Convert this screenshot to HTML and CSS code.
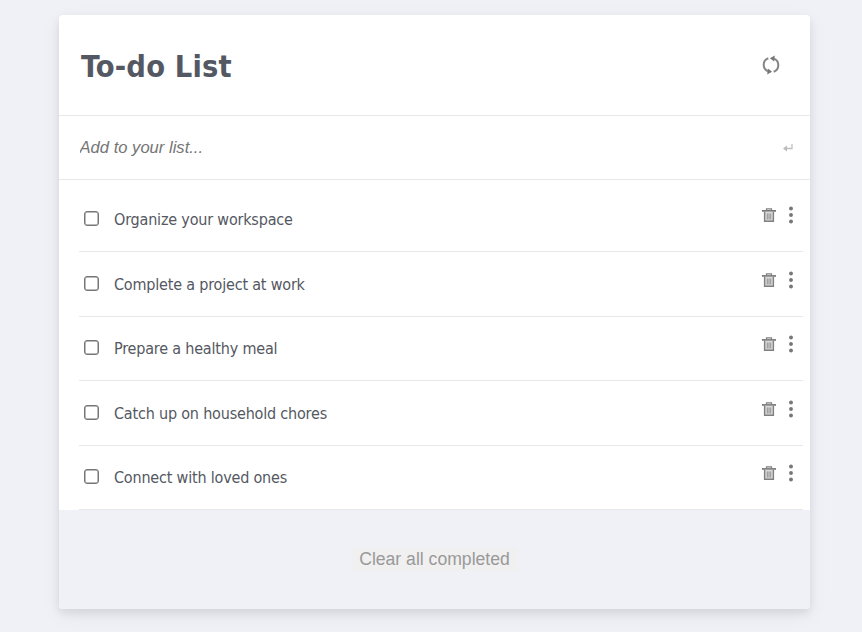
FILE: index.html
```html
<!DOCTYPE html>
<html lang="en">
<head>
<meta charset="utf-8">
<title>To-do List</title>
<link rel="stylesheet" href="styles.css">
</head>
<body>
<svg class="sprite" aria-hidden="true">
  <symbol id="trash" viewBox="0 0 14 14">
    <path d="M4.500 2.500V.8h5v1.700" fill="none" stroke="#818181" stroke-width="1.200"/>
    <path d="M0 2.100h14v1.700H0z" fill="#777"/>
    <path d="M2.600 3.800v9.400h8.800V3.800" fill="#d8d8d8" stroke="#808080" stroke-width="1.400"/>
    <path d="M5.300 5.500v6M7 5.500v6M8.700 5.500v6" stroke="#8c8c8c" stroke-width=".9"/>
  </symbol>
  <symbol id="dots" viewBox="0 0 4 18">
    <circle cx="2" cy="2.500" r="1.950"/><circle cx="2" cy="9" r="1.950"/><circle cx="2" cy="15.500" r="1.950"/>
  </symbol>
</svg>
<main class="card">
  <header class="head">
    <h1>To-do List</h1>
    <svg class="refresh" viewBox="0 0 18 20" fill="none" stroke="#858585" stroke-width="2">
      <path d="M6.300 3.300C.3 5.500 .2 13.500 5.800 16.300M11.700 16.700C17.700 14.500 17.800 6.500 12.200 3.700"/>
      <path d="M7.900 3.200L12.800 .6L12.200 6.400zM10.100 16.800L5.200 19.400L5.800 13.600z" fill="#777" stroke="none"/>
    </svg>
  </header>
  <div class="add">
    <input type="text" placeholder="Add to your list...">
    <svg class="enter" viewBox="0 0 10 8"><path d="M9 0v4.500H3" fill="none" stroke="#c0c0c0" stroke-width="1.300"/><path d="M0 4.500L4 1.500v6z" fill="#bbb"/></svg>
  </div>
  <ul class="list">
    <li><input type="checkbox"><span>Organize your workspace</span><svg class="trash"><use href="#trash"/></svg><svg class="dots"><use href="#dots"/></svg></li>
    <li><input type="checkbox"><span>Complete a project at work</span><svg class="trash"><use href="#trash"/></svg><svg class="dots"><use href="#dots"/></svg></li>
    <li><input type="checkbox"><span>Prepare a healthy meal</span><svg class="trash"><use href="#trash"/></svg><svg class="dots"><use href="#dots"/></svg></li>
    <li><input type="checkbox"><span>Catch up on household chores</span><svg class="trash"><use href="#trash"/></svg><svg class="dots"><use href="#dots"/></svg></li>
    <li><input type="checkbox"><span>Connect with loved ones</span><svg class="trash"><use href="#trash"/></svg><svg class="dots"><use href="#dots"/></svg></li>
  </ul>
  <footer class="foot"><button type="button">Clear all completed</button></footer>
</main>
</body>
</html>
```
FILE: styles.css
```css
* { box-sizing: border-box; }
body {
  margin: 0;
  height: 632px;
  overflow: hidden;
  background: #f0f1f6;
  color: #545862;
  font-family: Tahoma, "DejaVu Sans Condensed", "Noto Sans", sans-serif;
}
.sprite { display: none; }
.card {
  width: 751px;
  height: 594px;
  margin: 15px 0 0 59px;
  background: #fff;
  border-radius: 4px;
  box-shadow: 0 4px 8px 0 rgba(0, 0, 0, .08), 0 6px 20px 0 rgba(0, 0, 0, .06);
  overflow: hidden;
}
.head {
  display: flex;
  align-items: center;
  justify-content: space-between;
  height: 101px;
  padding: 0 30px 0 22px;
  border-bottom: 1px solid #e8e8e8;
}
h1 {
  margin: 3px 0 0;
  font-size: 30.500px;
  line-height: 40px;
  letter-spacing: .150px;
  white-space: nowrap;
}
.refresh { width: 18px; height: 20px; }
.add {
  display: flex;
  align-items: center;
  height: 64px;
  padding: 0 17px 0 20.500px;
  border-bottom: 1px solid #e8e8e8;
}
.add input {
  flex: 1;
  padding: 0;
  border: 0;
  outline: 0;
  font: italic 16.600px "Liberation Sans", Arial, sans-serif;
}
.add input::placeholder { color: #757575; }
.enter { width: 10px; height: 8px; }
.list { height: 330px; margin: 0; padding: 7.500px 7px 0 20px; list-style: none; }
.list li {
  display: flex;
  align-items: center;
  height: 64.500px;
  border-bottom: 1px solid #e8e8e8;
}
.list input {
  appearance: none;
  width: 15px;
  height: 15px;
  margin: 0 15px 1px 5px;
  border: 1px solid #767676;
  box-shadow: inset 0 0 0 .5px #767676;
  border-radius: 3px;
}
.list span {
  margin-top: 1.500px;
  font-size: 16px;
  line-height: 24px;
  letter-spacing: -.190px;
  white-space: nowrap;
}
.trash { width: 14px; height: 14px; margin: 0 13px 8px auto; }
.dots { width: 4px; height: 18px; margin: 0 10px 8px 0; fill: #777; }
.foot {
  display: flex;
  align-items: center;
  justify-content: center;
  height: 99px;
  background: #f0f1f6;
}
.foot button {
  width: 165px;
  height: 23px;
  padding: 0;
  border: 0;
  background: #f0f0f1;
  color: #999;
  font: 17.600px "Liberation Sans", Arial, sans-serif;
}
```
